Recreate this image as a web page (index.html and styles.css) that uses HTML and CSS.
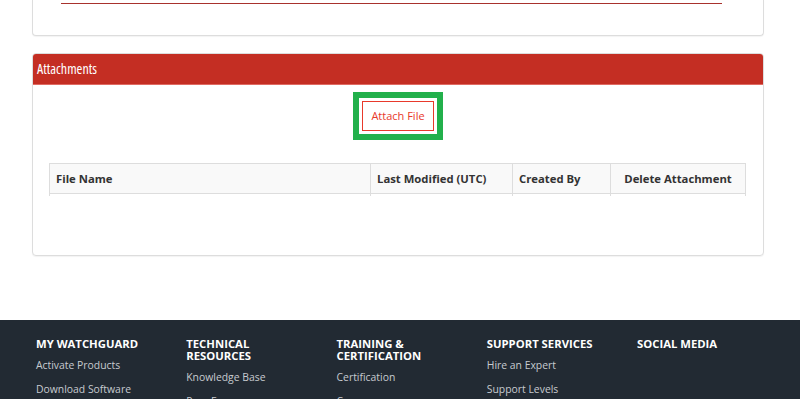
FILE: index.html
```html
<!DOCTYPE html>
<html lang="en">
<head>
    <meta charset="UTF-8">
    <meta name="viewport" content="width=device-width, initial-scale=1.0">
    <title>Case Attachments</title>
    <link rel="stylesheet" href="styles.css">
</head>
<body>

<div class="panel panel-top">
    <div class="divider"></div>
</div>

<div class="panel panel-attachments">
    <div class="panel-heading">Attachments</div>
    <div class="panel-body">
        <div class="attach-row">
            <button class="btn-attach">Attach File</button>
        </div>
        <table class="attach-table">
            <colgroup>
                <col class="col-name">
                <col class="col-modified">
                <col class="col-created">
                <col class="col-delete">
            </colgroup>
            <thead>
                <tr>
                    <th>File Name</th>
                    <th>Last Modified (UTC)</th>
                    <th>Created By</th>
                    <th class="center">Delete Attachment</th>
                </tr>
            </thead>
            <tbody>
                <tr class="empty-row">
                    <td></td><td></td><td></td><td></td>
                </tr>
            </tbody>
        </table>
    </div>
</div>

<!-- Footer -->
<footer class="footer">
    <div class="footer-cols">
        <div class="footer-col">
            <h4>My WatchGuard</h4>
            <a href="#">Activate Products</a>
            <a href="#">Download Software</a>
        </div>
        <div class="footer-col">
            <h4>Technical<br>Resources</h4>
            <a href="#">Knowledge Base</a>
            <a href="#">Peer Forums</a>
        </div>
        <div class="footer-col">
            <h4>Training &amp;<br>Certification</h4>
            <a href="#">Certification</a>
            <a href="#">Courses</a>
        </div>
        <div class="footer-col">
            <h4>Support Services</h4>
            <a href="#">Hire an Expert</a>
            <a href="#">Support Levels</a>
        </div>
        <div class="footer-col">
            <h4>Social Media</h4>
        </div>
    </div>
</footer>

</body>
</html>
```

FILE: styles.css
```css
body {
    margin: 0;
    font-family: "Open Sans", Arial, sans-serif;
    background-color: #fff;
    color: #333;
}
.panel {
    margin: 0 36px 0 32px;
    background-color: #fff;
    border: 1px solid #ddd;
    border-radius: 4px;
    box-shadow: 0 1px 1px rgba(0, 0, 0, 0.05);
}
.panel-top {
    border-top: none;
    border-radius: 0 0 4px 4px;
    padding: 3px 41px 31px 28px;
}
.divider {
    height: 1px;
    background-color: #a8322d;
}
.panel-attachments {
    margin-top: 17px;
    overflow: hidden;
}
.panel-heading {
    height: 30px;
    line-height: 30px;
    padding: 0 4px;
    background-color: #c42e23;
    border-bottom: 1px solid #e06a62;
    color: #fff;
    font-size: 14px;
    font-stretch: 75%;
}
.panel-body {
    padding: 16px 17px 59px 16px;
}
.attach-row {
    text-align: center;
    margin-bottom: 32px;
    font-size: 0;
}
.btn-attach {
    width: 72px;
    height: 30px;
    padding: 0 0 2px;
    margin-left: 1px;
    background-color: #fff;
    border: 1px solid #e8392b;
    border-radius: 0;
    color: #e8392b;
    font-family: "Open Sans", Arial, sans-serif;
    font-size: 11px;
    outline: 6px solid #22b04b;
    outline-offset: 3px;
    cursor: pointer;
}
.attach-table {
    width: 100%;
    border-collapse: collapse;
    table-layout: fixed;
}
.col-name { width: 321px; }
.col-modified { width: 142px; }
.col-created { width: 98px; }
.col-delete { width: auto; }
.attach-table th {
    height: 29px;
    padding: 0 6px;
    background-color: #f9f9f9;
    border: 1px solid #ddd;
    text-align: left;
    font-size: 11.3px;
    font-weight: 700;
    color: #333;
}
.attach-table th.center {
    text-align: center;
}
.empty-row td {
    height: 2px;
    padding: 0;
    border-left: 1px solid #ddd;
    border-right: 1px solid #ddd;
}
.footer {
    margin-top: 64px;
    background-color: #222a33;
    padding: 18px 0 20px 36px;
}
.footer-cols {
    display: grid;
    grid-template-columns: repeat(5, 150.25px);
}
.footer-col h4 {
    margin: 0 0 7px;
    font-size: 11.3px;
    line-height: 12px;
    font-weight: 700;
    text-transform: uppercase;
    color: #fff;
}
.footer-col a {
    display: block;
    margin-bottom: 8px;
    font-size: 10.4px;
    line-height: 16px;
    color: #c7cbd0;
    text-decoration: none;
}
```
